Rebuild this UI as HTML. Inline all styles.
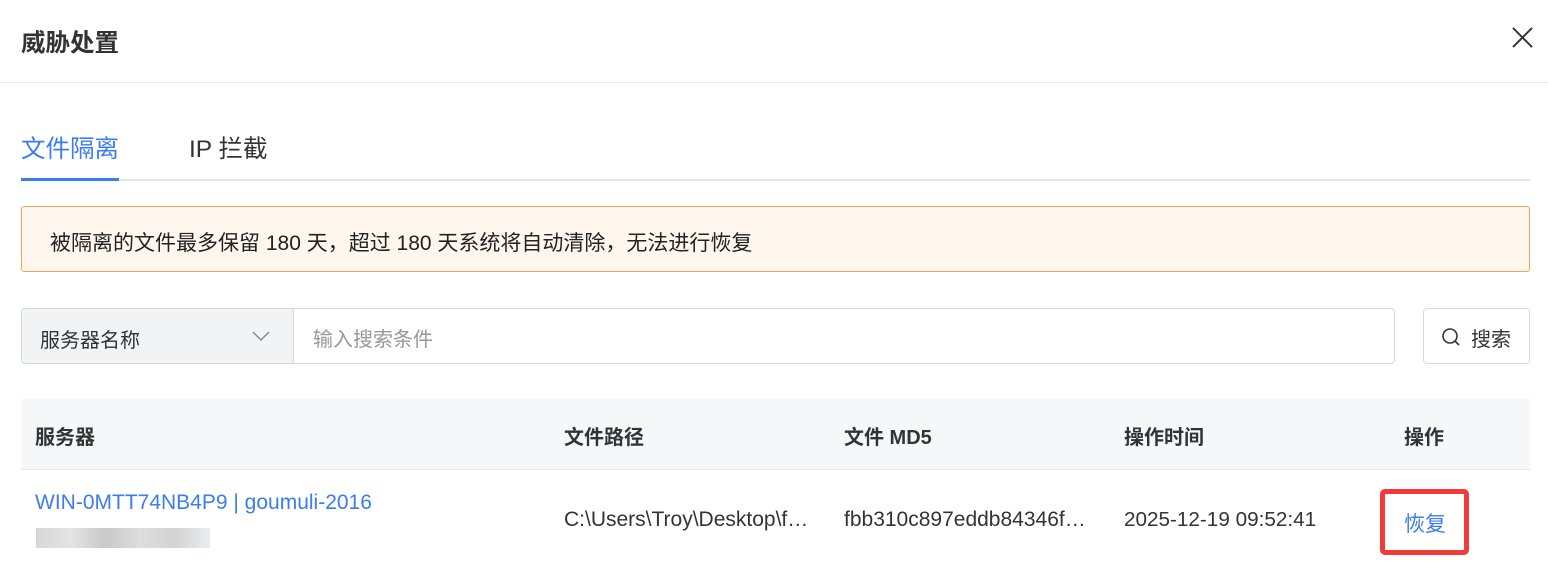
<!DOCTYPE html><html><head><meta charset="utf-8"><style>
body{margin:0;width:1548px;height:572px;overflow:hidden;background:#fff;font-family:"Liberation Sans","Noto Sans CJK SC",sans-serif;color:#333;position:relative}
.a{position:absolute;white-space:nowrap}
</style></head><body>
<div class="a" style="left:21px;top:24px;font-size:24.5px;font-weight:bold;color:#333">威胁处置</div>
<svg class="a" style="left:1512px;top:27px" width="21" height="21" viewBox="0 0 22 22"><path d="M1 1L21 21M21 1L1 21" stroke="#333" stroke-width="2"/></svg>
<div class="a" style="left:0;top:82px;width:1548px;height:1px;background:#e8e8e8"></div>
<div class="a" style="left:21px;top:130px;font-size:24.5px;color:#3c7cf2">文件隔离</div>
<div class="a" style="left:189px;top:130px;font-size:24.5px;color:#333">IP 拦截</div>
<div class="a" style="left:21px;top:179px;width:1509px;height:2px;background:#e5e5e5"></div>
<div class="a" style="left:21px;top:178px;width:98px;height:3px;background:#3c7cf2"></div>
<div class="a" style="left:21px;top:206px;width:1507px;height:64px;background:#fff7ee;border:1px solid #f5a55a;border-radius:3px"></div>
<div class="a" style="left:50px;top:227px;font-size:21px;color:#222">被隔离的文件最多保留 180 天，超过 180 天系统将自动清除，无法进行恢复</div>
<div class="a" style="left:21px;top:308px;width:1372px;height:54px;border:1px solid #d9d9d9;border-radius:4px"></div>
<div class="a" style="left:22px;top:309px;width:271px;height:54px;background:#f2f3f5;border-right:1px solid #d9d9d9;border-radius:4px 0 0 4px"></div>
<div class="a" style="left:40px;top:324px;font-size:20px;color:#333">服务器名称</div>
<svg class="a" style="left:251px;top:330px" width="20" height="12" viewBox="0 0 20 12"><path d="M2 2L10 10L18 2" fill="none" stroke="#888" stroke-width="1.5"/></svg>
<div class="a" style="left:313px;top:323px;font-size:20px;color:#999">输入搜索条件</div>
<div class="a" style="left:1423px;top:308px;width:105px;height:54px;border:1px solid #d9d9d9;border-radius:4px"></div>
<svg class="a" style="left:1441px;top:327px" width="20" height="20" viewBox="0 0 20 20"><circle cx="9" cy="9" r="7" fill="none" stroke="#333" stroke-width="1.6"/><path d="M14 14L18 18" stroke="#333" stroke-width="1.6"/></svg>
<div class="a" style="left:1471px;top:323px;font-size:20px;color:#333">搜索</div>
<div class="a" style="left:21px;top:399px;width:1509px;height:70px;background:#f6f7f9;border-bottom:1px solid #e8e8e8"></div>
<div class="a" style="left:35px;top:421px;font-size:20px;font-weight:bold;color:#333">服务器</div>
<div class="a" style="left:564px;top:421px;font-size:20px;font-weight:bold;color:#333">文件路径</div>
<div class="a" style="left:844px;top:421px;font-size:20px;font-weight:bold;color:#333">文件 MD5</div>
<div class="a" style="left:1124px;top:421px;font-size:20px;font-weight:bold;color:#333">操作时间</div>
<div class="a" style="left:1404px;top:421px;font-size:20px;font-weight:bold;color:#333">操作</div>
<div class="a" style="left:35px;top:491px;font-size:21px;color:#3c7cf2">WIN-0MTT74NB4P9 | goumuli-2016</div>
<div class="a" style="left:36px;top:528px;width:174px;height:20px;background:linear-gradient(90deg,#ccc,#ddd 20%,#bbb 40%,#d5d5d5 60%,#c8c8c8 80%,#e5e8ec);opacity:.8"></div>
<div class="a" style="left:564px;top:508px;font-size:21px;color:#333">C:\Users\Troy\Desktop\f…</div>
<div class="a" style="left:844px;top:508px;font-size:21px;color:#333">fbb310c897eddb84346f…</div>
<div class="a" style="left:1124px;top:508px;font-size:20.7px;color:#333">2025-12-19 09:52:41</div>
<div class="a" style="left:1380px;top:489px;width:79px;height:56px;border:5px solid #f33a3a;border-radius:5px"></div>
<div class="a" style="left:1404px;top:508px;font-size:21px;color:#3c7cf2">恢复</div>
</body></html>
